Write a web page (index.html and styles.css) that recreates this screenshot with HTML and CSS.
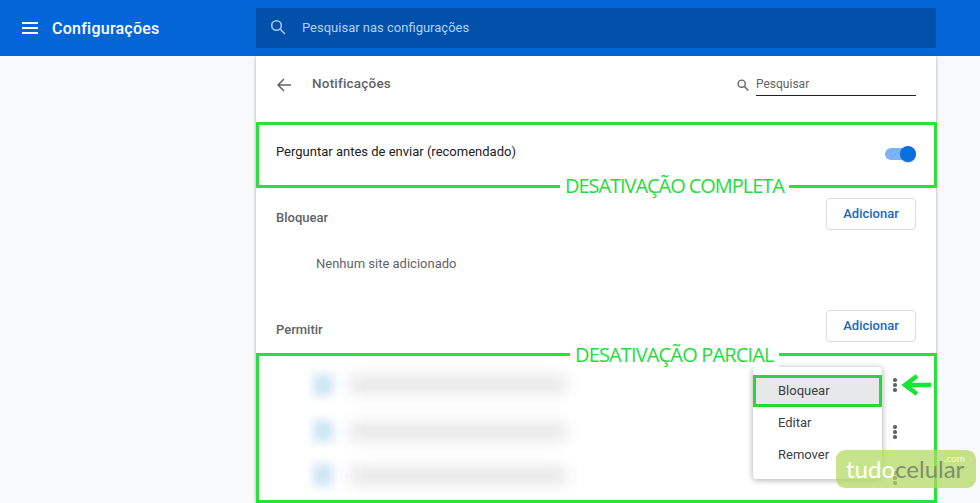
FILE: index.html
```html
<!DOCTYPE html>
<html lang="pt-BR">
<head>
<meta charset="utf-8">
<title>Configurações</title>
<link rel="stylesheet" href="styles.css">
</head>
<body>
<header class="topbar">
  <div class="brand">
    <svg class="menu-icon" width="16" height="12" viewBox="0 0 16 12"><path d="M0 1h16M0 6h16M0 11h16" stroke="#fff" stroke-width="2"/></svg>
    <span class="brand-title">Configurações</span>
  </div>
  <div class="searchbar">
    <svg width="16" height="16" viewBox="0 0 16 16" fill="none" stroke="#a9c8f0" stroke-width="1.6"><circle cx="6.5" cy="6.5" r="4.8"/><path d="M10 10l5 5"/></svg>
    <span class="searchbar-text">Pesquisar nas configurações</span>
  </div>
</header>
<main class="page">
  <section class="card">
    <div class="title-row">
      <svg class="back" width="14" height="14" viewBox="0 0 14 14" fill="none" stroke="#5f6368" stroke-width="1.5"><path d="M14 7H1M7 1L1 7l6 6"/></svg>
      <h1 class="title">Notificações</h1>
      <div class="filter">
        <svg width="12" height="12" viewBox="0 0 12 12" fill="none" stroke="#5f6368" stroke-width="1.4"><circle cx="4.7" cy="4.7" r="3.6"/><path d="M7.4 7.4l4 4"/></svg>
        <span class="filter-input">Pesquisar</span>
      </div>
    </div>
    <div class="toggle-row">
      <span>Perguntar antes de enviar (recomendado)</span>
      <span class="toggle"><span class="knob"></span></span>
    </div>
    <div class="section-head head-block">
      <span class="section-label">Bloquear</span>
      <button class="add">Adicionar</button>
    </div>
    <div class="empty">Nenhum site adicionado</div>
    <div class="section-head head-allow">
      <span class="section-label">Permitir</span>
      <button class="add">Adicionar</button>
    </div>
    <div class="site site-1"><span class="blur-icon"></span><span class="blur-text"></span><span class="dots"><i></i><i></i><i></i></span></div>
    <div class="site site-2"><span class="blur-icon"></span><span class="blur-text"></span><span class="dots"><i></i><i></i><i></i></span></div>
    <div class="site site-3"><span class="blur-icon"></span><span class="blur-text"></span><span class="dots"><i></i><i></i><i></i></span></div>

    <div class="menu">
      <div class="menu-item active">Bloquear</div>
      <div class="menu-item">Editar</div>
      <div class="menu-item">Remover</div>
    </div>

    <div class="mark mark-full"><span class="mark-label">DESATIVAÇÃO COMPLETA</span></div>
    <div class="mark mark-partial"><span class="mark-label">DESATIVAÇÃO PARCIAL</span></div>
    <div class="mark-item"></div>
    <svg class="arrow" width="30" height="22" viewBox="0 0 30 22" fill="none" stroke="#14e834" stroke-width="4.5"><path d="M30 11H5M16 2L4 11l12 9"/></svg>
  </section>
</main>
<div class="watermark"><span class="wm-tudo">tudo</span><span class="wm-celular">celular</span><span class="wm-com">.com</span></div>
</body>
</html>
```
FILE: styles.css
```css
* { box-sizing: border-box; }
html, body { margin: 0; height: 503px; overflow: hidden; }
body { background: #f8f9fa; font-family: Roboto, "Liberation Sans", sans-serif; color: #202124; position: relative; }

.topbar { height: 56px; background: #0266d6; display: flex; align-items: center; }
.brand { width: 256px; display: flex; align-items: center; padding-left: 22px; }
.menu-icon { margin-right: 14px; }
.brand-title { color: #fff; font-size: 16px; font-weight: 500; letter-spacing: .25px; }
.searchbar { width: 680px; height: 40px; background: #0150aa; display: flex; align-items: center; padding: 0 0 2px 14px; }
.searchbar-text { color: #b4d0f4; font-size: 13px; margin-left: 16px; }

.page { padding-left: 256px; }
.card { width: 680px; height: 447px; background: #fff; box-shadow: 0 0 3px rgba(60,64,67,.45); position: relative; }

.title-row { height: 67px; display: flex; align-items: center; padding: 0 20px 10px 21px; }
.back { margin-right: 21px; }
.title { margin: 0 0 4px; font-size: 13.5px; font-weight: 500; color: #5f6368; flex: 1; letter-spacing: .2px; }
.filter { display: flex; align-items: center; gap: 7px; }
.filter-input { width: 160px; height: 23px; border-bottom: 1px solid #202124; font-size: 12px; color: #5f6368; line-height: 17px; padding-top: 3px; }

.toggle-row { height: 64px; display: flex; align-items: center; justify-content: space-between; padding: 0 20px 8px; font-size: 13px; }
.toggle { width: 31px; height: 12px; border-radius: 6px; background: #7ab4f5; position: relative; display: block; margin-top: 6px; }
.knob { position: absolute; right: 0; top: -2px; width: 16px; height: 16px; border-radius: 50%; background: #0b6fe0; box-shadow: 0 1px 1px rgba(0,0,0,.2); }

.section-head { display: flex; align-items: center; justify-content: space-between; padding: 0 20px; }
.head-block { margin-top: 11px; }
.section-label { font-size: 13px; font-weight: 500; color: #5f6368; margin-top: 6px; }
.add { width: 90px; height: 32px; border: 1px solid #dadce0; border-radius: 4px; background: #fff; color: #1a68bd; font: 500 13px Roboto, "Liberation Sans", sans-serif; padding: 0 0 2px; }
.empty { height: 80px; padding: 25px 0 0 60px; font-size: 13px; color: #5f6368; line-height: 18px; }

.site { height: 46px; display: flex; align-items: center; padding-left: 57px; position: relative; }
.site-1 { margin-top: 19px; height: 47px; }
.site-3 { height: 42px; }
.blur-icon { width: 20px; height: 22px; background: #cfe6f4; filter: blur(5px); flex: none; }
.blur-text { width: 216px; height: 15px; margin-left: 17px; background: #e2e2e2; filter: blur(8px); flex: none; }
.dots { position: absolute; left: 637px; top: 17px; display: flex; flex-direction: column; gap: 1.5px; }
.dots i { width: 3.5px; height: 3.5px; border-radius: 50%; background: #5f6368; display: block; }

.menu { position: absolute; left: 497px; top: 311px; width: 129px; height: 112px; background: #fff; border-radius: 4px; box-shadow: 0 1px 6px rgba(60,64,67,.45); padding-top: 8px; }
.menu-item { height: 32px; padding-left: 25px; font-size: 13px; line-height: 32px; color: #3c4043; }
.menu-item.active { background: #e6e8ea; }

.mark { position: absolute; left: 0; width: 681px; border: 3px solid #29e03f; }
.mark-full { top: 66px; height: 66px; }
.mark-partial { top: 297px; height: 150px; }
.mark-label { position: absolute; background: #fff; color: #1fdc3c; font-family: "Open Sans", sans-serif; font-weight: 500; font-size: 20px; line-height: 24px; padding: 0 5px; white-space: nowrap; letter-spacing: -.85px; }
.mark-full .mark-label { left: 301px; top: 49px; letter-spacing: -1.05px; }
.mark-partial .mark-label { left: 311px; top: -13px; }
.mark-item { position: absolute; left: 497px; top: 319px; width: 129px; height: 32px; border: 3px solid #29d63c; }
.arrow { position: absolute; left: 645px; top: 318px; }

.watermark { position: absolute; left: 836px; top: 450px; width: 140px; height: 38px; border-radius: 9px; background: rgba(178,216,96,.72); font-family: Lato, sans-serif; font-size: 24px; line-height: 38px; padding-left: 10px; white-space: nowrap; letter-spacing: 0; }
.wm-tudo { color: #fff; }
.wm-celular { color: #7f8f70; }
.wm-com { position: absolute; right: 11px; top: 2px; font-size: 10px; line-height: 12px; color: #f2f7e4; }
```
